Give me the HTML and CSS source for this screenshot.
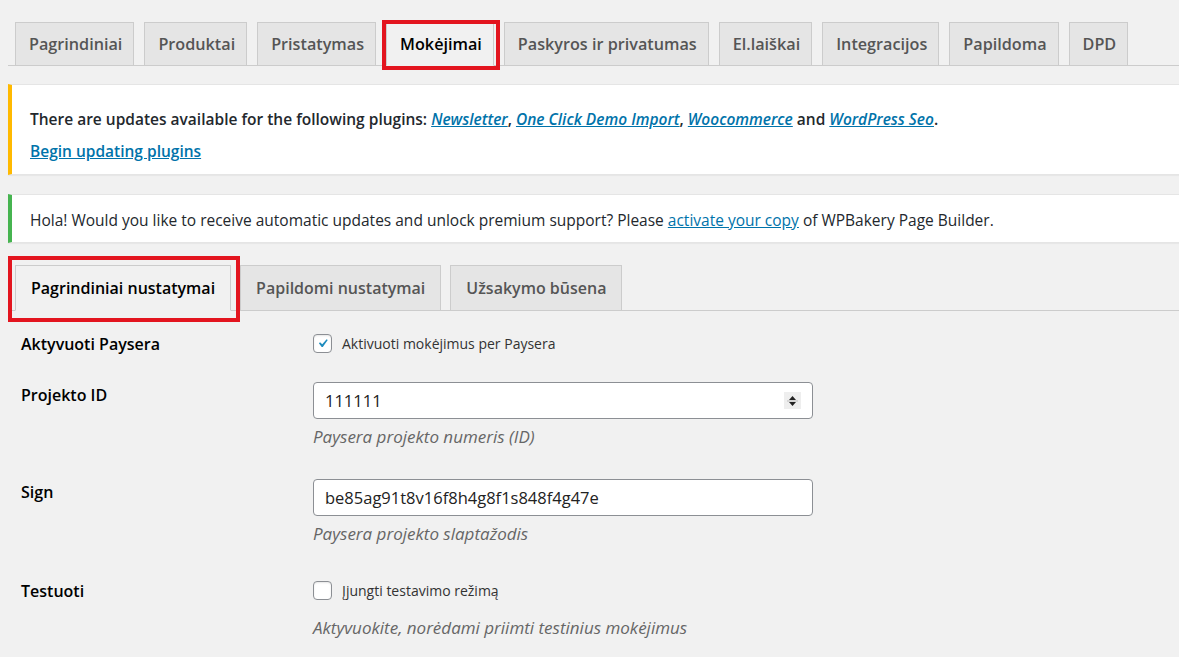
FILE: index.html
```html
<!DOCTYPE html>
<html lang="lt">
<head>
  <meta charset="UTF-8" />
  <meta name="viewport" content="width=device-width, initial-scale=1.0"/>
  <title>Paysera nustatymai</title>
  <link rel="stylesheet" href="styles.css">
</head>
<body>
  <div class="wrap">
    <nav class="nav-tabs">
      <a class="nav-tab">Pagrindiniai</a>
      <a class="nav-tab">Produktai</a>
      <a class="nav-tab">Pristatymas</a>
      <a class="nav-tab active marked">Mokėjimai</a>
      <a class="nav-tab">Paskyros ir privatumas</a>
      <a class="nav-tab">El.laiškai</a>
      <a class="nav-tab">Integracijos</a>
      <a class="nav-tab">Papildoma</a>
      <a class="nav-tab">DPD</a>
    </nav>

    <div class="notice notice-warning">
      <p class="strong">There are updates available for the following plugins: <a href="#" class="plugin">Newsletter</a>, <a href="#" class="plugin">One Click Demo Import</a>, <a href="#" class="plugin">Woocommerce</a> and <a href="#" class="plugin">WordPress Seo</a>.</p>
      <p class="strong"><a href="#">Begin updating plugins</a></p>
    </div>

    <div class="notice notice-success">
      <p>Hola! Would you like to receive automatic updates and unlock premium support? Please <a href="#">activate your copy</a> of WPBakery Page Builder.</p>
    </div>

    <nav class="sub-tabs">
      <a class="sub-tab active marked-sub">Pagrindiniai nustatymai</a>
      <a class="sub-tab">Papildomi nustatymai</a>
      <a class="sub-tab">Užsakymo būsena</a>
    </nav>

    <div class="form">
      <div class="row row-activate">
        <div class="label">Aktyvuoti Paysera</div>
        <div class="field">
          <label class="check">
            <span class="box checked">
              <svg width="21" height="21" viewBox="0 0 20 20"><path d="M14.83 4.89l1.34.94-5.81 8.38H9.02L5.78 9.67l1.34-1.25 2.57 2.4z" fill="#1e8cbe"/></svg>
            </span>
            Aktivuoti mokėjimus per Paysera
          </label>
        </div>
      </div>

      <div class="row row-project">
        <div class="label">Projekto ID</div>
        <div class="field">
          <div class="input number">
            111111
            <span class="spinner">
              <svg width="11" height="16" viewBox="0 0 11 16"><path d="M5.5 3L9 7H2z M5.5 13L2 9h7z" fill="#222"/><line x1="0" y1="8" x2="11" y2="8" stroke="#bbb" stroke-width="1"/></svg>
            </span>
          </div>
          <p class="desc">Paysera projekto numeris (ID)</p>
        </div>
      </div>

      <div class="row row-sign">
        <div class="label">Sign</div>
        <div class="field">
          <div class="input">be85ag91t8v16f8h4g8f1s848f4g47e</div>
          <p class="desc">Paysera projekto slaptažodis</p>
        </div>
      </div>

      <div class="row row-test">
        <div class="label">Testuoti</div>
        <div class="field">
          <label class="check">
            <span class="box"></span>
            Įjungti testavimo režimą
          </label>
          <p class="desc desc-check">Aktyvuokite, norėdami priimti testinius mokėjimus</p>
        </div>
      </div>
    </div>
  </div>
</body>
</html>
```

FILE: styles.css
```css
html, body {
  margin: 0;
  overflow: hidden;
}
body {
  font-family: "Open Sans", "Noto Sans", sans-serif;
  background: #f1f1f1;
  color: #23282d;
  font-size: 15.5px;
}
a {
  color: #0073aa;
}
.wrap {
  padding-left: 8px;
  margin-right: -20px;
}

/* main tabs */
.nav-tabs {
  display: flex;
  padding: 22px 0 0 7px;
  border-bottom: 1px solid #ccc;
  gap: 10px;
}
.nav-tab {
  position: relative;
  display: block;
  height: 42px;
  line-height: 42px;
  padding: 0 11px 0 13px;
  border: 1px solid #ccc;
  border-bottom: none;
  background: #e5e5e5;
  color: #555;
  font-size: 16.2px;
  font-weight: 600;
}
.nav-tab.active {
  background: #f1f1f1;
  color: #000;
  border-bottom: 1px solid #f1f1f1;
  margin-bottom: -1px;
}
.marked::after {
  content: "";
  position: absolute;
  left: -5px;
  right: -7px;
  top: -3px;
  bottom: -5px;
  border: 4px solid #e3151f;
}

/* notices */
.notice {
  background: #fff;
  border: 1px solid #e5e5e5;
  border-left-width: 4px;
  box-shadow: 0 1px 1px rgba(0, 0, 0, 0.04);
  padding: 0 18px;
}
.notice p {
  margin: 0;
  line-height: 22px;
}
.notice-warning {
  border-left-color: #ffb900;
  margin-top: 18px;
  padding-top: 23px;
  padding-bottom: 12px;
}
.notice-warning p + p {
  margin-top: 10px;
}
.notice-success {
  border-left-color: #46b450;
  margin-top: 19px;
  padding-top: 14px;
  padding-bottom: 11px;
}
.strong {
  font-weight: 600;
}
.plugin {
  font-style: italic;
}

/* sub tabs */
.sub-tabs {
  display: flex;
  margin-top: 22px;
  padding-left: 7px;
  border-bottom: 1px solid #ccc;
  gap: 9px;
}
.sub-tab {
  position: relative;
  height: 44px;
  line-height: 44px;
  padding: 0 15px;
  border: 1px solid #ccc;
  border-bottom: none;
  background: #e5e5e5;
  color: #555;
  font-size: 16px;
  font-weight: 600;
}
.sub-tab.active {
  background: #f1f1f1;
  color: #000;
  border-bottom: 1px solid #f1f1f1;
  margin-bottom: -1px;
}
.marked-sub::after {
  content: "";
  position: absolute;
  left: -8px;
  right: -10px;
  top: -10px;
  bottom: -12px;
  border: 4px solid #e3151f;
}

/* form */
.form {
  padding-left: 13px;
}
.row {
  display: grid;
  grid-template-columns: 292px 500px;
}
.label {
  font-weight: 600;
  font-size: 16px;
  color: #000;
  line-height: 20px;
}
.row-activate {
  margin-top: 23px;
}
.row-project {
  margin-top: 28px;
}
.row-project .label,
.row-sign .label {
  padding-top: 3px;
}
.row-sign {
  margin-top: 31px;
}
.row-test {
  margin-top: 36px;
}
.check {
  display: flex;
  align-items: center;
  gap: 10px;
  font-size: 14px;
  color: #333;
  line-height: 19px;
}
.box {
  width: 17px;
  height: 17px;
  border: 1px solid #8c8f94;
  border-radius: 4px;
  background: #fff;
  box-shadow: inset 0 1px 2px rgba(0, 0, 0, 0.1);
  display: flex;
  align-items: center;
  justify-content: center;
  overflow: visible;
}
.input {
  position: relative;
  box-sizing: border-box;
  width: 500px;
  height: 37px;
  line-height: 35px;
  padding: 0 11px;
  border: 1px solid #8c8f94;
  border-radius: 4px;
  background: #fff;
  font-size: 16.5px;
  color: #222;
}
.spinner {
  position: absolute;
  right: 11px;
  top: 9px;
  width: 17px;
  height: 17px;
  background: #eee;
  display: flex;
  align-items: center;
  justify-content: center;
}
.desc {
  margin: 7px 0 0;
  font-style: italic;
  color: #666;
  font-size: 17px;
  line-height: 22px;
}
.desc-check {
  margin-top: 17px;
}
```
